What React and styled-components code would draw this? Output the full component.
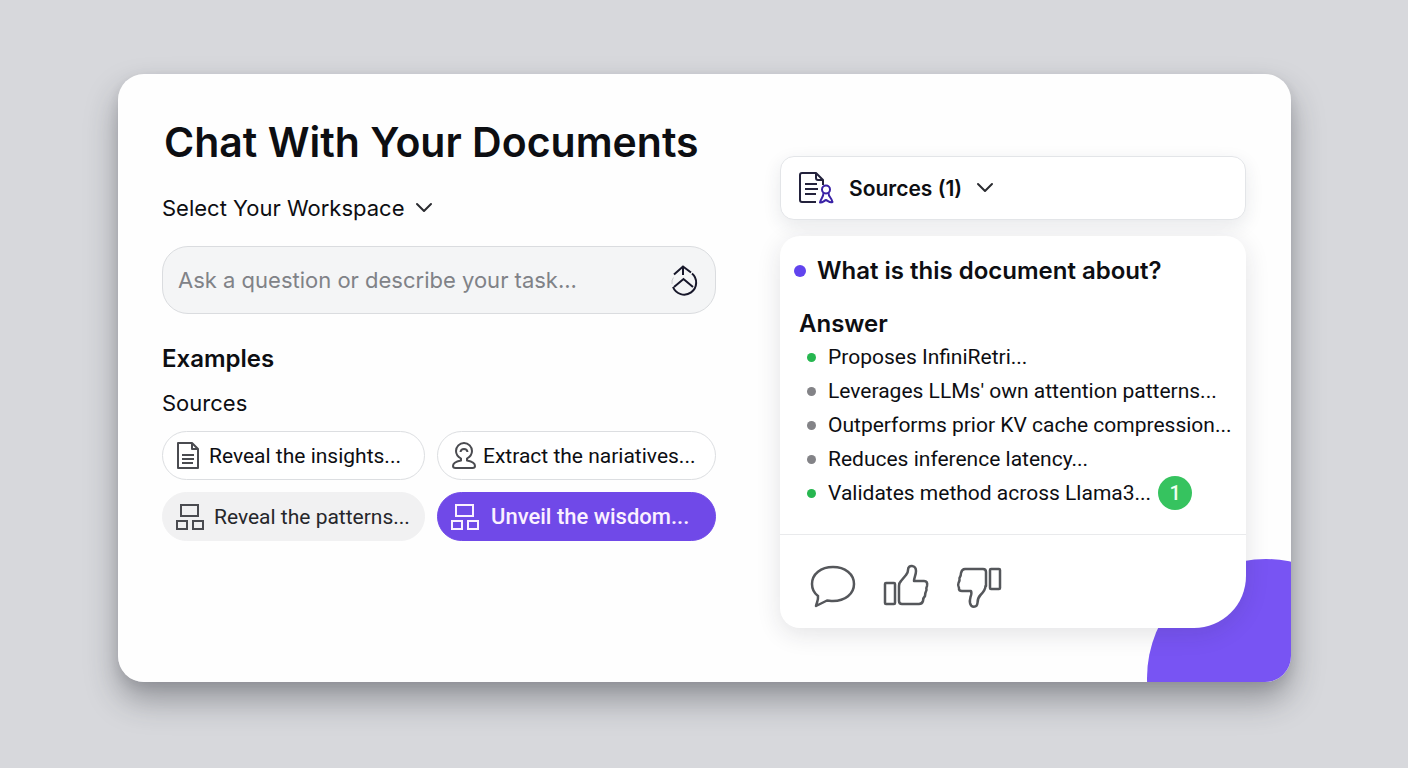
import { useState } from "react";
import styled, { createGlobalStyle, css } from "styled-components";

const GlobalStyle = createGlobalStyle`
  * {
    box-sizing: border-box;
  }

  body {
    margin: 0;
    background: #d7d8dc;
    color: #0d0e12;
    font-family: Inter, "Liberation Sans", sans-serif;
  }

  button,
  input,
  select {
    margin: 0;
    font: inherit;
    color: inherit;
  }

  h1,
  h2,
  h3,
  ul {
    margin: 0;
    padding: 0;
  }
`;

const Page = styled.main`
  min-height: 100vh;
  padding: 74px 117px 74px 118px;
`;

const Card = styled.div`
  position: relative;
  display: grid;
  grid-template-columns: minmax(0, 554fr) minmax(0, 466fr);
  column-gap: 64px;
  padding: 42px 45px 54px 44px;
  overflow: hidden;
  border-radius: 26px;
  background: #fefefe;
`;

const CardShadow = styled.div`
  border-radius: 26px;
  box-shadow: 0 18px 32px rgba(40, 42, 50, 0.38), 0 4px 12px rgba(40, 42, 50, 0.1);
`;

const Blob = styled.div`
  position: absolute;
  right: -94px;
  bottom: -115px;
  width: 238px;
  height: 238px;
  border-radius: 50%;
  background: #7854f3;
`;

const Title = styled.h1`
  padding-left: 2px;
  font-size: 41px;
  font-weight: 600;
  line-height: 52px;
  white-space: nowrap;
`;

const WorkspacePicker = styled.label`
  display: flex;
  align-items: center;
  gap: 10px;
  width: fit-content;
  margin-top: 24px;
`;

const WorkspaceSelect = styled.select`
  height: 32px;
  padding: 0;
  border: 0;
  background: none;
  appearance: none;
  font-size: 22px;
`;

const AskBox = styled.form`
  display: flex;
  align-items: center;
  height: 68px;
  margin-top: 22px;
  padding: 0 16px 0 15px;
  border: 1px solid #dadcdf;
  border-radius: 26px;
  background: #f4f5f6;
`;

const AskInput = styled.input`
  flex: 1;
  min-width: 0;
  padding: 0;
  border: 0;
  outline: 0;
  background: none;
  font-size: 22px;

  &::placeholder {
    color: #808287;
    opacity: 1;
  }
`;

const IconButton = styled.button`
  display: flex;
  padding: 0;
  border: 0;
  background: none;
  color: ${({ $color }) => $color || "#55575b"};
  cursor: pointer;
`;

const ExamplesTitle = styled.h2`
  margin-top: 31px;
  font-size: 24px;
  font-weight: 600;
  line-height: 28px;
`;

const ExamplesSubtitle = styled.h3`
  margin-top: 16px;
  font-size: 22px;
  font-weight: 400;
  line-height: 28px;
`;

const Chips = styled.div`
  display: grid;
  grid-template-columns: 263fr 279fr;
  gap: 12px;
  margin-top: 14px;
`;

const chipKinds = {
  outline: css`
    border-color: #dcdee1;
    background: #fff;
  `,
  muted: css`
    border-color: #f1f1f2;
    background: #f1f1f2;
    color: #26272b;
  `,
  primary: css`
    border-color: #7049e8;
    background: #7049e8;
    color: #fbf0ff;
    font-size: 22px;
    font-weight: 500;
  `,
};

const Chip = styled.button`
  display: flex;
  align-items: center;
  gap: ${({ $gap }) => $gap}px;
  height: 49px;
  padding: 0 12px 0 13px;
  border: 1px solid;
  border-radius: 25px;
  font-family: Roboto, "Liberation Sans", sans-serif;
  font-size: 21px;
  white-space: nowrap;
  cursor: pointer;
  ${({ $kind }) => chipKinds[$kind]}

  svg {
    flex: none;
    color: ${({ $kind }) => ($kind === "primary" ? "#fbf0ff" : "#4a4b50")};
  }
`;

const SidePanel = styled.section`
  position: relative;
  display: flex;
  flex-direction: column;
  gap: 16px;
  padding-top: 40px;
`;

const SourcesButton = styled.button`
  display: flex;
  align-items: center;
  height: 64px;
  padding: 0 18px;
  border: 1px solid #e3e5e8;
  border-radius: 14px;
  background: #fff;
  box-shadow: 0 6px 18px rgba(40, 50, 70, 0.1);
  font-size: 21px;
  font-weight: 600;
  cursor: pointer;
`;

const SourcesLabel = styled.span`
  margin: 0 14px 0 15px;
`;

const AnswerCard = styled.article`
  border-radius: 20px 20px 52px 20px;
  background: #fff;
  box-shadow: 0 6px 24px rgba(30, 35, 50, 0.12);
`;

const AnswerBody = styled.div`
  padding: 18px 0 24px 14px;
`;

const Question = styled.h2`
  display: flex;
  align-items: center;
  gap: 11px;
  font-size: 24px;
  font-weight: 600;
  line-height: 34px;
  white-space: nowrap;
`;

const Dot = styled.span`
  flex: none;
  width: ${({ $size }) => $size}px;
  height: ${({ $size }) => $size}px;
  border-radius: 50%;
  background: ${({ $color }) => $color};
`;

const AnswerTitle = styled.h3`
  margin-top: 20px;
  padding-left: 5px;
  font-size: 24px;
  font-weight: 600;
  line-height: 32px;
`;

const Points = styled.ul`
  padding-left: 13px;
  list-style: none;
`;

const Point = styled.li`
  display: flex;
  align-items: center;
  gap: 12px;
  height: 34px;
  font-family: Roboto, "Liberation Sans", sans-serif;
  font-size: 21px;
  white-space: nowrap;
`;

const Badge = styled.span`
  display: flex;
  align-items: center;
  justify-content: center;
  width: 34px;
  height: 34px;
  margin-left: -5px;
  border-radius: 50%;
  background: #36c35f;
  color: #effff0;
  font-size: 20px;
  font-weight: 500;
`;

const Actions = styled.footer`
  display: flex;
  align-items: center;
  gap: 27px;
  height: 94px;
  padding: 8px 30px 0;
  border-top: 1px solid #e9eaec;
`;

const ChevronIcon = () => (
  <svg width="18" height="12" viewBox="0 0 18 12" fill="none" stroke="#2b2c31" strokeWidth="2" aria-hidden="true">
    <path d="M2 2l7 7 7-7" strokeLinecap="round" strokeLinejoin="round" />
  </svg>
);

const SendIcon = () => (
  <svg width="30" height="34" viewBox="0 0 30 34" fill="none" stroke="currentColor" strokeWidth="2" aria-hidden="true">
    <path d="M5 11.5L14 3.5l8 6M14 4v8M5 24l9.500-8L24 24" />
    <path d="M23 10.500A12 12 0 1 1 4 24" />
    <path d="M4.500 14.500Q2.500 17 3 21" strokeWidth="1" opacity="0.2" />
  </svg>
);

const DocumentIcon = () => (
  <svg width="24" height="28" viewBox="0 0 24 28" fill="none" stroke="currentColor" strokeWidth="2" aria-hidden="true">
    <path d="M2 1h14l6 6v19H2zM16 1v6h6" strokeLinejoin="round" />
    <path d="M6 13h12M6 17h12M6 21h11" />
  </svg>
);

const PersonIcon = () => (
  <svg width="26" height="28" viewBox="0 0 26 28" fill="none" stroke="currentColor" strokeWidth="2" aria-hidden="true">
    <path
      d="M10 16.500C6.500 14.500 5 12 5 9a8 8 0 0 1 16 0c0 3-1.500 5.500-5 7.500v2c5 1 8 3 8 5.500 0 1.500-1 2-2.500 2h-17C3 26 2 25.500 2 24c0-2.500 3-4.500 8-5.500z"
      strokeLinejoin="round"
    />
    <path d="M9.500 10c.5-4 6.500-4 7 0" />
  </svg>
);

const BlocksIcon = () => (
  <svg width="28" height="26" viewBox="0 0 28 26" fill="none" stroke="currentColor" strokeWidth="2" aria-hidden="true">
    <rect x="5" y="1" width="17" height="11" />
    <rect x="1" y="17" width="10" height="8" />
    <rect x="17" y="17" width="10" height="8" />
  </svg>
);

const SourcesIcon = () => (
  <svg width="35" height="32" viewBox="0 0 35 32" fill="none" strokeWidth="2" strokeLinejoin="round" aria-hidden="true">
    <path d="M17 30H3q-2 0-2-2V3q0-2 2-2h14l7 7v5M17 1v5q0 2 2 2h5" stroke="#23223c" />
    <path d="M6 12h12M6 17h13M6 22h11" stroke="#23223c" />
    <circle cx="27" cy="17.500" r="4" stroke="#3a22a6" />
    <path
      d="M24.500 21c0 4-2.500 5-3.500 9.500 2.500.5 3.500-1.500 6-2.500 2.500 1 3.500 3 6.500 2-1-4.500-4-5-4-9"
      stroke="#3a22a6"
    />
  </svg>
);

const CommentIcon = () => (
  <svg width="46" height="44" viewBox="0 0 46 44" fill="none" stroke="currentColor" strokeWidth="2.500" aria-hidden="true">
    <path
      d="M8 32C4 29 2 25 2 20 2 10 11 3 23 3s21 7 21 17-9 17-21 17c-3 0-4-.5-6-.5L6 42c1-4 2.500-6 2-10z"
      strokeLinejoin="round"
    />
  </svg>
);

const ThumbUpIcon = () => (
  <svg width="46" height="44" viewBox="0 0 46 44" fill="none" stroke="currentColor" strokeWidth="2.500" aria-hidden="true">
    <rect x="2" y="19" width="10" height="21" rx="1" />
    <path
      d="M16 22q0-3 2-5l5-6q2-2 2-5c0-6 8-5 8 1 0 4-2 7-2 10h10q4 0 3 5-1 2-.5 4-1.500 3-1.500 6-2 2-2 5-1 3-4 3H19q-3 0-3-3z"
      strokeLinejoin="round"
    />
  </svg>
);

const ThumbDownIcon = () => (
  <svg width="46" height="44" viewBox="0 0 46 44" fill="none" stroke="currentColor" strokeWidth="2.500" aria-hidden="true">
    <rect x="34" y="5" width="10" height="20" rx="1" />
    <path
      d="M30 22V8q0-3-3-3H9Q6 5 5 9q0 3-1.500 5 .5 3-1 5-1 2 .5 5-.5 3 3 3h9q1 2-.5 6-1 4-.5 6c1 5 7 5 7.500 0q0-5 3-8 5-5 5-9z"
      strokeLinejoin="round"
    />
  </svg>
);

const examples = [
  { label: "Reveal the insights...", kind: "outline", Icon: DocumentIcon, gap: 9 },
  { label: "Extract the nariatives...", kind: "outline", Icon: PersonIcon, gap: 6 },
  { label: "Reveal the patterns...", kind: "muted", Icon: BlocksIcon, gap: 10 },
  { label: "Unveil the wisdom...", kind: "primary", Icon: BlocksIcon, gap: 12 },
];

const points = [
  { text: "Proposes InfiniRetri...", active: true },
  { text: "Leverages LLMs' own attention patterns..." },
  { text: "Outperforms prior KV cache compression..." },
  { text: "Reduces inference latency..." },
  { text: "Validates method across Llama3...", active: true, count: 1 },
];

const AskPanel = () => {
  const [question, setQuestion] = useState("");

  return (
    <section>
      <Title>Chat With Your Documents</Title>
      <WorkspacePicker>
        <WorkspaceSelect aria-label="Workspace">
          <option>Select Your Workspace</option>
        </WorkspaceSelect>
        <ChevronIcon />
      </WorkspacePicker>
      <AskBox onSubmit={(e) => e.preventDefault()}>
        <AskInput
          aria-label="Question"
          placeholder="Ask a question or describe your task..."
          value={question}
          onChange={(e) => setQuestion(e.target.value)}
        />
        <IconButton type="submit" aria-label="Send" $color="#17172a">
          <SendIcon />
        </IconButton>
      </AskBox>
      <ExamplesTitle>Examples</ExamplesTitle>
      <ExamplesSubtitle>Sources</ExamplesSubtitle>
      <Chips>
        {examples.map(({ label, kind, Icon, gap }) => (
          <Chip key={label} type="button" $kind={kind} $gap={gap} onClick={() => setQuestion(label)}>
            <Icon />
            {label}
          </Chip>
        ))}
      </Chips>
    </section>
  );
};

const AnswerPanel = () => (
  <SidePanel>
    <SourcesButton type="button">
      <SourcesIcon />
      <SourcesLabel>Sources (1)</SourcesLabel>
      <ChevronIcon />
    </SourcesButton>
    <AnswerCard>
      <AnswerBody>
        <Question>
          <Dot $size={12} $color="#6144ee" />
          What is this document about?
        </Question>
        <AnswerTitle>Answer</AnswerTitle>
        <Points>
          {points.map(({ text, active, count }) => (
            <Point key={text}>
              <Dot $size={9} $color={active ? "#27b750" : "#838387"} />
              {text}
              {count && <Badge>{count}</Badge>}
            </Point>
          ))}
        </Points>
      </AnswerBody>
      <Actions>
        <IconButton type="button" aria-label="Comment">
          <CommentIcon />
        </IconButton>
        <IconButton type="button" aria-label="Good answer">
          <ThumbUpIcon />
        </IconButton>
        <IconButton type="button" aria-label="Bad answer">
          <ThumbDownIcon />
        </IconButton>
      </Actions>
    </AnswerCard>
  </SidePanel>
);

const App = () => (
  <>
    <GlobalStyle />
    <Page>
      <CardShadow>
        <Card>
          <Blob />
          <AskPanel />
          <AnswerPanel />
        </Card>
      </CardShadow>
    </Page>
  </>
);

export default App;
